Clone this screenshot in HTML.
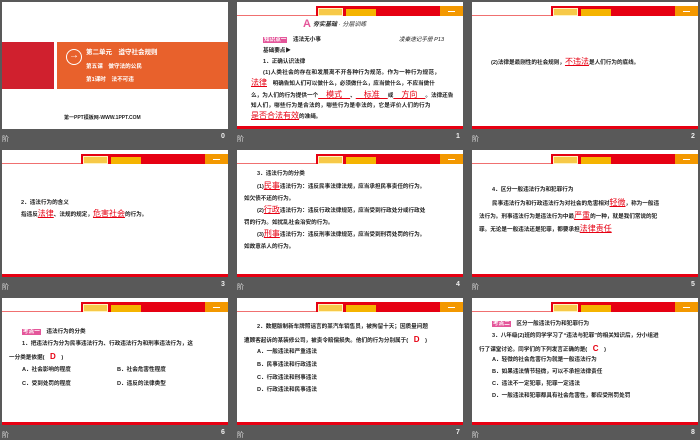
<!DOCTYPE html>
<html><head><meta charset="utf-8"><style>
*{margin:0;padding:0;box-sizing:border-box}
body{width:700px;height:438px;background:#595959;position:relative;overflow:hidden;font-family:"Liberation Sans","Noto Sans CJK SC",sans-serif}
.s{position:absolute;width:226px;height:127px;background:#fff;overflow:hidden}
.s .bb{position:absolute;left:0;right:0;bottom:0;height:3px;background:#e60012}
.hd .ln{position:absolute;left:0;top:13px;width:80px;height:1px;background:#f07070}
.hd .rb{position:absolute;left:79px;top:4px;width:147px;height:10px;background:#e60012}
.hd .ob{position:absolute;left:203px;top:4px;width:23px;height:10px;background:#f39800}
.hd .ob:after{content:"";position:absolute;left:8px;top:5px;width:7px;height:1px;background:#fff}
.hd .t1{position:absolute;left:81px;top:6px;width:25px;height:8px;background:#f7c948;border:1px solid #fff3c0}
.hd .t2{position:absolute;left:109px;top:7px;width:30px;height:7px;background:#f5b400}
.t{position:absolute;font-size:5.6px;color:#222;font-weight:bold;white-space:nowrap;line-height:7px}
.r{color:#e60012;font-size:8px;font-weight:normal;text-decoration:underline;text-decoration-thickness:0.5px}
.cap{position:absolute;font-size:7px;color:#ddd;font-family:"Liberation Sans","Noto Sans CJK SC",sans-serif}
.num{position:absolute;font-size:7px;color:#eee;font-weight:bold}
.pk{background:#e4569a;color:#fff;padding:0 1px}
</style></head><body>

<!-- slide 0 -->
<div class="s" style="left:2px;top:2px">
 <div style="position:absolute;left:0;top:40px;width:52px;height:47px;background:#d0202e"></div>
 <div style="position:absolute;left:55px;top:40px;width:171px;height:47px;background:#e8612c"></div>
 <div style="position:absolute;left:64px;top:47px;width:16px;height:16px;border:1.5px solid #fff;border-radius:50%;color:#fff;font-size:10px;line-height:12px;text-align:center;font-weight:bold">→</div>
 <div class="t" style="left:84px;top:47px;color:#fff;font-size:6.5px">第二单元　遵守社会规则</div>
 <div class="t" style="left:84px;top:62px;color:#fff">第五课　做守法的公民</div>
 <div class="t" style="left:84px;top:75px;color:#fff">第1课时　法不可违</div>
 <div class="t" style="left:62px;top:113px;font-size:5px">第一PPT模板网-WWW.1PPT.COM</div>
</div>
<div class="cap" style="left:2px;top:134px">阶</div><div class="num" style="left:221px;top:133px">0</div>

<!-- slide 1 -->
<div class="s hd" style="left:237px;top:2px">
 <div class="ln"></div><div class="rb"></div><div class="ob"></div><div class="t1"></div><div class="t2"></div>
 <div class="t" style="left:66px;top:16px;color:#e4569a;font-size:11px;line-height:12px">A</div>
 <div class="t" style="left:76px;top:20px;font-size:6px;font-style:italic">夯实基础 <span style="font-weight:normal">· 分层训练</span></div>
 <div class="t" style="left:26px;top:35px"><span class="pk">知识点一</span>　违法无小事</div>
 <div class="t" style="left:162px;top:35px;font-weight:normal;font-style:italic">凌秦速记手册 P13</div>
 <div class="t" style="left:26px;top:46px">基础要点▶</div>
 <div class="t" style="left:26px;top:57px">1．正确认识法律</div>
 <div class="t" style="left:26px;top:68px;letter-spacing:0.25px">(1)人类社会的存在和发展离不开各种行为规范。作为一种行为规范，</div>
 <div class="t" style="left:14px;top:77px"><span class="r">法律</span>　明确告知人们可以做什么，必须做什么，应当做什么，不应当做什</div>
 <div class="t" style="left:14px;top:89px">么，为人们的行为提供一个<span class="r">　模式　</span>、<span class="r">　标准　</span>或<span class="r">　方向　</span>。法律还告</div>
 <div class="t" style="left:14px;top:101px;letter-spacing:0.2px">知人们，哪些行为是合法的，哪些行为是非法的，它是评价人们的行为</div>
 <div class="t" style="left:14px;top:110px"><span class="r">是否合法有效</span>的准绳。</div>
 <div class="bb"></div>
</div>
<div class="cap" style="left:237px;top:134px">阶</div><div class="num" style="left:456px;top:133px">1</div>

<!-- slide 2 -->
<div class="s hd" style="left:472px;top:2px">
 <div class="ln"></div><div class="rb"></div><div class="ob"></div><div class="t1"></div><div class="t2"></div>
 <div class="t" style="left:19px;top:56px">(2)法律是最刚性的社会规则，<span class="r">不违法</span>是人们行为的底线。</div>
 <div class="bb"></div>
</div>
<div class="cap" style="left:472px;top:134px">阶</div><div class="num" style="left:691px;top:133px">2</div>

<!-- slide 3 -->
<div class="s hd" style="left:2px;top:150px">
 <div class="ln"></div><div class="rb"></div><div class="ob"></div><div class="t1"></div><div class="t2"></div>
 <div class="t" style="left:19px;top:50px">2．违法行为的含义</div>
 <div class="t" style="left:19px;top:60px">指违反<span class="r">法律</span>、法规的规定，<span class="r">危害社会</span>的行为。</div>
 <div class="bb"></div>
</div>
<div class="cap" style="left:2px;top:282px">阶</div><div class="num" style="left:221px;top:281px">3</div>

<!-- slide 4 -->
<div class="s hd" style="left:237px;top:150px">
 <div class="ln"></div><div class="rb"></div><div class="ob"></div><div class="t1"></div><div class="t2"></div>
 <div class="t" style="left:20px;top:21px">3．违法行为的分类</div>
 <div class="t" style="left:20px;top:32px">(1)<span class="r">民事</span>违法行为：违反民事法律法规，应当承担民事责任的行为。</div>
 <div class="t" style="left:7px;top:46px">如欠债不还的行为。</div>
 <div class="t" style="left:20px;top:56px">(2)<span class="r">行政</span>违法行为：违反行政法律规范，应当受到行政处分或行政处</div>
 <div class="t" style="left:7px;top:70px">罚的行为。如扰乱社会治安的行为。</div>
 <div class="t" style="left:20px;top:80px">(3)<span class="r">刑事</span>违法行为：违反刑事法律规范，应当受到刑罚处罚的行为。</div>
 <div class="t" style="left:7px;top:94px">如故意杀人的行为。</div>
 <div class="bb"></div>
</div>
<div class="cap" style="left:237px;top:282px">阶</div><div class="num" style="left:456px;top:281px">4</div>

<!-- slide 5 -->
<div class="s hd" style="left:472px;top:150px">
 <div class="ln"></div><div class="rb"></div><div class="ob"></div><div class="t1"></div><div class="t2"></div>
 <div class="t" style="left:20px;top:37px">4．区分一般违法行为和犯罪行为</div>
 <div class="t" style="left:20px;top:49px">民事违法行为和行政违法行为对社会的危害相对<span class="r">轻微</span>，称为一般违</div>
 <div class="t" style="left:7px;top:62px">法行为。刑事违法行为是违法行为中最<span class="r">严重</span>的一种，就是我们常说的犯</div>
 <div class="t" style="left:7px;top:75px">罪。无论是一般违法还是犯罪，都要承担<span class="r">法律责任</span></div>
 <div class="bb"></div>
</div>
<div class="cap" style="left:472px;top:282px">阶</div><div class="num" style="left:691px;top:281px">5</div>

<!-- slide 6 -->
<div class="s hd" style="left:2px;top:298px">
 <div class="ln"></div><div class="rb"></div><div class="ob"></div><div class="t1"></div><div class="t2"></div>
 <div class="t" style="left:20px;top:31px"><span class="pk">考点一</span>　违法行为的分类</div>
 <div class="t" style="left:20px;top:43px">1．把违法行为分为民事违法行为、行政违法行为和刑事违法行为，这</div>
 <div class="t" style="left:7px;top:55px">一分类是依据(　<span style="color:#e60012;font-size:8px">D</span>　)</div>
 <div class="t" style="left:20px;top:69px">A．社会影响的程度</div>
 <div class="t" style="left:115px;top:69px">B．社会危害性程度</div>
 <div class="t" style="left:20px;top:83px">C．受到处罚的程度</div>
 <div class="t" style="left:115px;top:83px">D．违反的法律类型</div>
 <div class="bb"></div>
</div>
<div class="cap" style="left:2px;top:430px">阶</div><div class="num" style="left:221px;top:429px">6</div>

<!-- slide 7 -->
<div class="s hd" style="left:237px;top:298px">
 <div class="ln"></div><div class="rb"></div><div class="ob"></div><div class="t1"></div><div class="t2"></div>
 <div class="t" style="left:20px;top:26px">2．数据版制新车牌照谣言的某汽车销售员，被拘留十天；因质量问题</div>
 <div class="t" style="left:7px;top:38px">遭顾客起诉的某装修公司，被责令赔偿损失。他们的行为分别属于(　<span style="color:#e60012;font-size:8px">D</span>　)</div>
 <div class="t" style="left:20px;top:51px">A．一般违法和严重违法</div>
 <div class="t" style="left:20px;top:64px">B．民事违法和行政违法</div>
 <div class="t" style="left:20px;top:77px">C．行政违法和刑事违法</div>
 <div class="t" style="left:20px;top:89px">D．行政违法和民事违法</div>
 <div class="bb"></div>
</div>
<div class="cap" style="left:237px;top:430px">阶</div><div class="num" style="left:456px;top:429px">7</div>

<!-- slide 8 -->
<div class="s hd" style="left:472px;top:298px">
 <div class="ln"></div><div class="rb"></div><div class="ob"></div><div class="t1"></div><div class="t2"></div>
 <div class="t" style="left:20px;top:23px"><span class="pk">考点二</span>　区分一般违法行为和犯罪行为</div>
 <div class="t" style="left:20px;top:35px">3．八年级(2)班的同学学习了“违法与犯罪”的相关知识后，分小组进</div>
 <div class="t" style="left:7px;top:47px">行了课堂讨论。同学们的下列发言正确的是(　<span style="color:#e60012;font-size:8px">C</span>　)</div>
 <div class="t" style="left:20px;top:59px">A．轻微的社会危害行为就是一般违法行为</div>
 <div class="t" style="left:20px;top:71px">B．如果违法情节轻微，可以不承担法律责任</div>
 <div class="t" style="left:20px;top:83px">C．违法不一定犯罪，犯罪一定违法</div>
 <div class="t" style="left:20px;top:95px">D．一般违法和犯罪都具有社会危害性，都应受刑罚处罚</div>
 <div class="bb"></div>
</div>
<div class="cap" style="left:472px;top:430px">阶</div><div class="num" style="left:691px;top:429px">8</div>

</body></html>
